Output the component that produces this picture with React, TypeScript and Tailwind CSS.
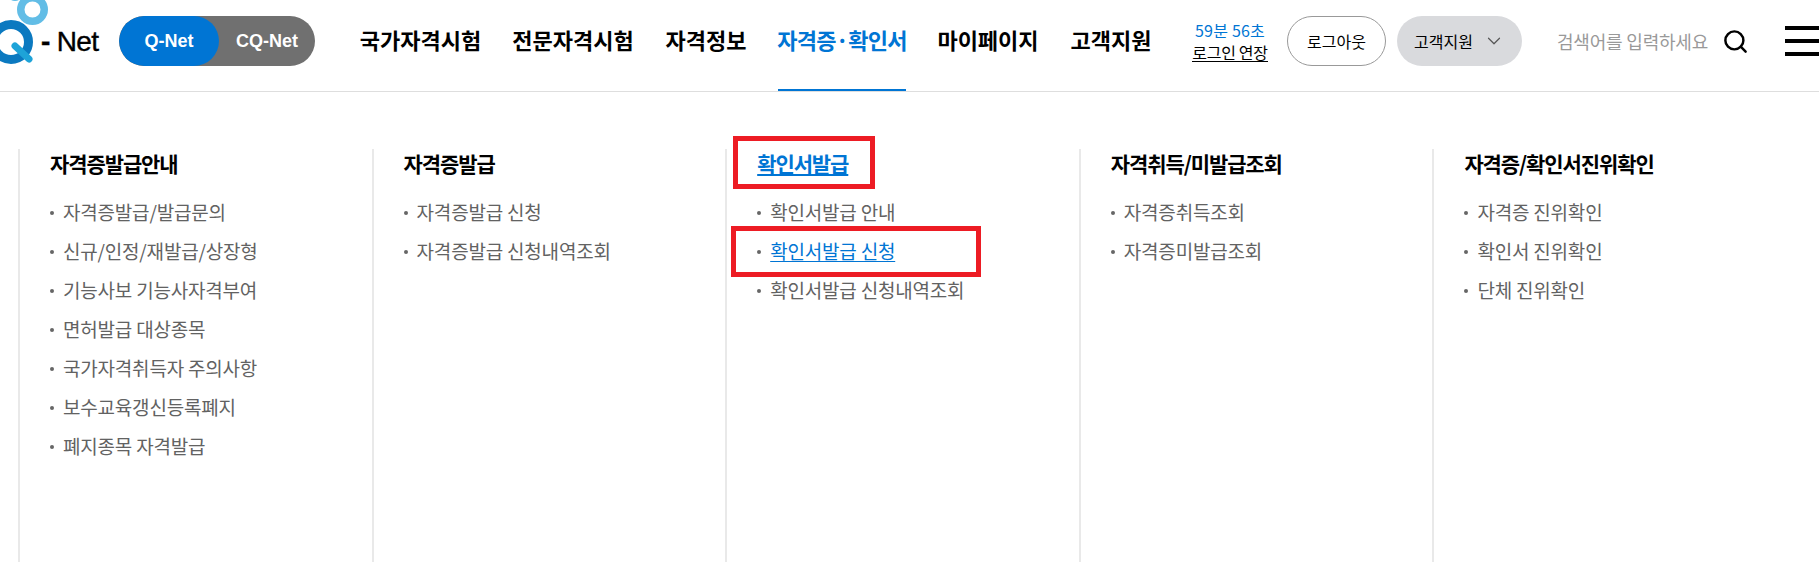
import { ChevronDown, Search } from 'lucide-react';

const NAV = [
  { label: '국가자격시험', width: 'w-[121px]' },
  { label: '전문자격시험', width: 'w-[122px]' },
  { label: '자격정보', width: 'w-[82px]' },
  { label: '자격증·확인서', width: 'w-[128px]', active: true },
  { label: '마이페이지', width: 'w-[102px]' },
  { label: '고객지원', width: 'w-[82px]' },
];

const COLUMNS = [
  {
    title: '자격증발급안내',
    items: [
      '자격증발급/발급문의',
      '신규/인정/재발급/상장형',
      '기능사보 기능사자격부여',
      '면허발급 대상종목',
      '국가자격취득자 주의사항',
      '보수교육갱신등록폐지',
      '폐지종목 자격발급',
    ],
  },
  { title: '자격증발급', items: ['자격증발급 신청', '자격증발급 신청내역조회'] },
  {
    title: '확인서발급',
    active: true,
    activeItem: 1,
    items: ['확인서발급 안내', '확인서발급 신청', '확인서발급 신청내역조회'],
  },
  { title: '자격취득/미발급조회', items: ['자격증취득조회', '자격증미발급조회'] },
  { title: '자격증/확인서진위확인', items: ['자격증 진위확인', '확인서 진위확인', '단체 진위확인'] },
];

function Logo() {
  return (
    <div className="relative h-[90px] w-[119px] shrink-0 overflow-hidden">
      <svg width="50" height="72" viewBox="0 0 50 72" className="absolute left-0 top-0">
        <circle cx="32.5" cy="13.5" r="11.75" fill="none" stroke="#62bde6" strokeWidth="7.5" />
        <circle cx="15" cy="-3" r="6" fill="none" stroke="#62bde6" strokeWidth="4" />
        <circle cx="11" cy="46" r="17.5" fill="none" stroke="#0b79c0" strokeWidth="9" />
        <path d="M15 50 L29 63" stroke="#1ea3d8" strokeWidth="7" strokeLinecap="round" />
      </svg>
      <span className="absolute left-[41px] top-[29px] flex items-center font-['Liberation_Sans',sans-serif] text-[28px] leading-[34px] tracking-[-0.6px] text-black [-webkit-text-stroke:0.4px_black]">
        <span className="font-bold">-</span>
        <span className="ml-[7px]">Net</span>
      </span>
    </div>
  );
}

export default function App() {
  return (
    <div className="relative h-[562px] w-full overflow-hidden bg-white font-['Noto_Sans_CJK_KR','Noto_Sans',sans-serif]">
      <header className="flex h-[92px] items-center border-b border-[#dedede] pb-[9px]">
        <Logo />
        <div className="flex h-[50px] w-[196px] shrink-0 overflow-hidden rounded-full bg-[#707070] font-['Liberation_Sans',sans-serif] text-[18px] font-bold text-white">
          <span className="flex w-[100px] items-center justify-center rounded-full bg-[#0075d4]">Q-Net</span>
          <span className="flex flex-1 items-center justify-center">CQ-Net</span>
        </div>
        <nav className="ml-[45px] flex h-[91px] shrink-0 gap-[31px] self-start">
          {NAV.map((n) => (
            <a
              key={n.label}
              className={`flex items-center justify-center whitespace-nowrap border-b-2 pb-[12px] pt-[2px] text-[22px] font-bold ${n.width} ${
                n.active ? 'border-[#0075d4] tracking-[-0.7px] text-[#0075d4]' : 'border-transparent text-black'
              }`}
            >
              {n.label}
            </a>
          ))}
        </nav>
        <div className="ml-[40px] flex w-[76px] shrink-0 flex-col items-center text-[16px] leading-[20px]">
          <span className="tracking-[0.2px] text-[#0075d4]">59분 56초</span>
          <a className="mt-[3px] border-b border-black leading-[18px] tracking-[-0.3px] text-black">로그인 연장</a>
        </div>
        <button className="ml-[19px] h-[50px] w-[99px] shrink-0 rounded-full border border-[#999] bg-white text-[16px] text-black">
          로그아웃
        </button>
        <button className="ml-[11px] flex h-[50px] w-[125px] shrink-0 items-center justify-center gap-[10px] rounded-full bg-[#d9dadd] text-[16px] text-black">
          고객지원
          <ChevronDown size={22} strokeWidth={1.3} className="text-[#555]" />
        </button>
        <span className="ml-[35px] w-[151px] shrink-0 whitespace-nowrap text-[18px] tracking-[-0.2px] text-[#999]">
          검색어를 입력하세요
        </span>
        <Search size={27} strokeWidth={2.2} className="ml-[14px] shrink-0 text-black" />
        <div className="ml-[36px] flex w-[40px] shrink-0 flex-col gap-[9px]">
          <span className="h-[4px] bg-black" />
          <span className="h-[4px] bg-black" />
          <span className="h-[4px] bg-black" />
        </div>
      </header>

      <main className="ml-[18px] mt-[57px] grid h-[413px] w-[1768px] grid-cols-5">
        {COLUMNS.map((c) => (
          <section key={c.title} className="border-l-2 border-[#e9e9e9] pl-[30px]">
            <h2
              className={`text-[21px] font-bold leading-[28px] tracking-[-1.1px] ${
                c.active ? 'text-[#0075d4] underline underline-offset-2' : 'text-black'
              }`}
            >
              {c.title}
            </h2>
            <ul className="mt-[16px] flex flex-col">
              {c.items.map((item, i) => (
                <li key={item} className="flex h-[39px] items-center text-[19px] tracking-[-0.2px] text-[#626262]">
                  <span className="mr-[9px] size-[4px] rounded-full bg-[#666]" />
                  <span className={c.activeItem === i ? 'text-[#0075d4] underline underline-offset-2' : ''}>{item}</span>
                </li>
              ))}
            </ul>
          </section>
        ))}
      </main>

      {/* red callouts drawn over the capture */}
      <div className="absolute left-[733px] top-[136px] h-[53px] w-[142px] border-[5px] border-[#ed1c24]" />
      <div className="absolute left-[731px] top-[226px] h-[51px] w-[250px] border-[5px] border-[#ed1c24]" />
    </div>
  );
}
